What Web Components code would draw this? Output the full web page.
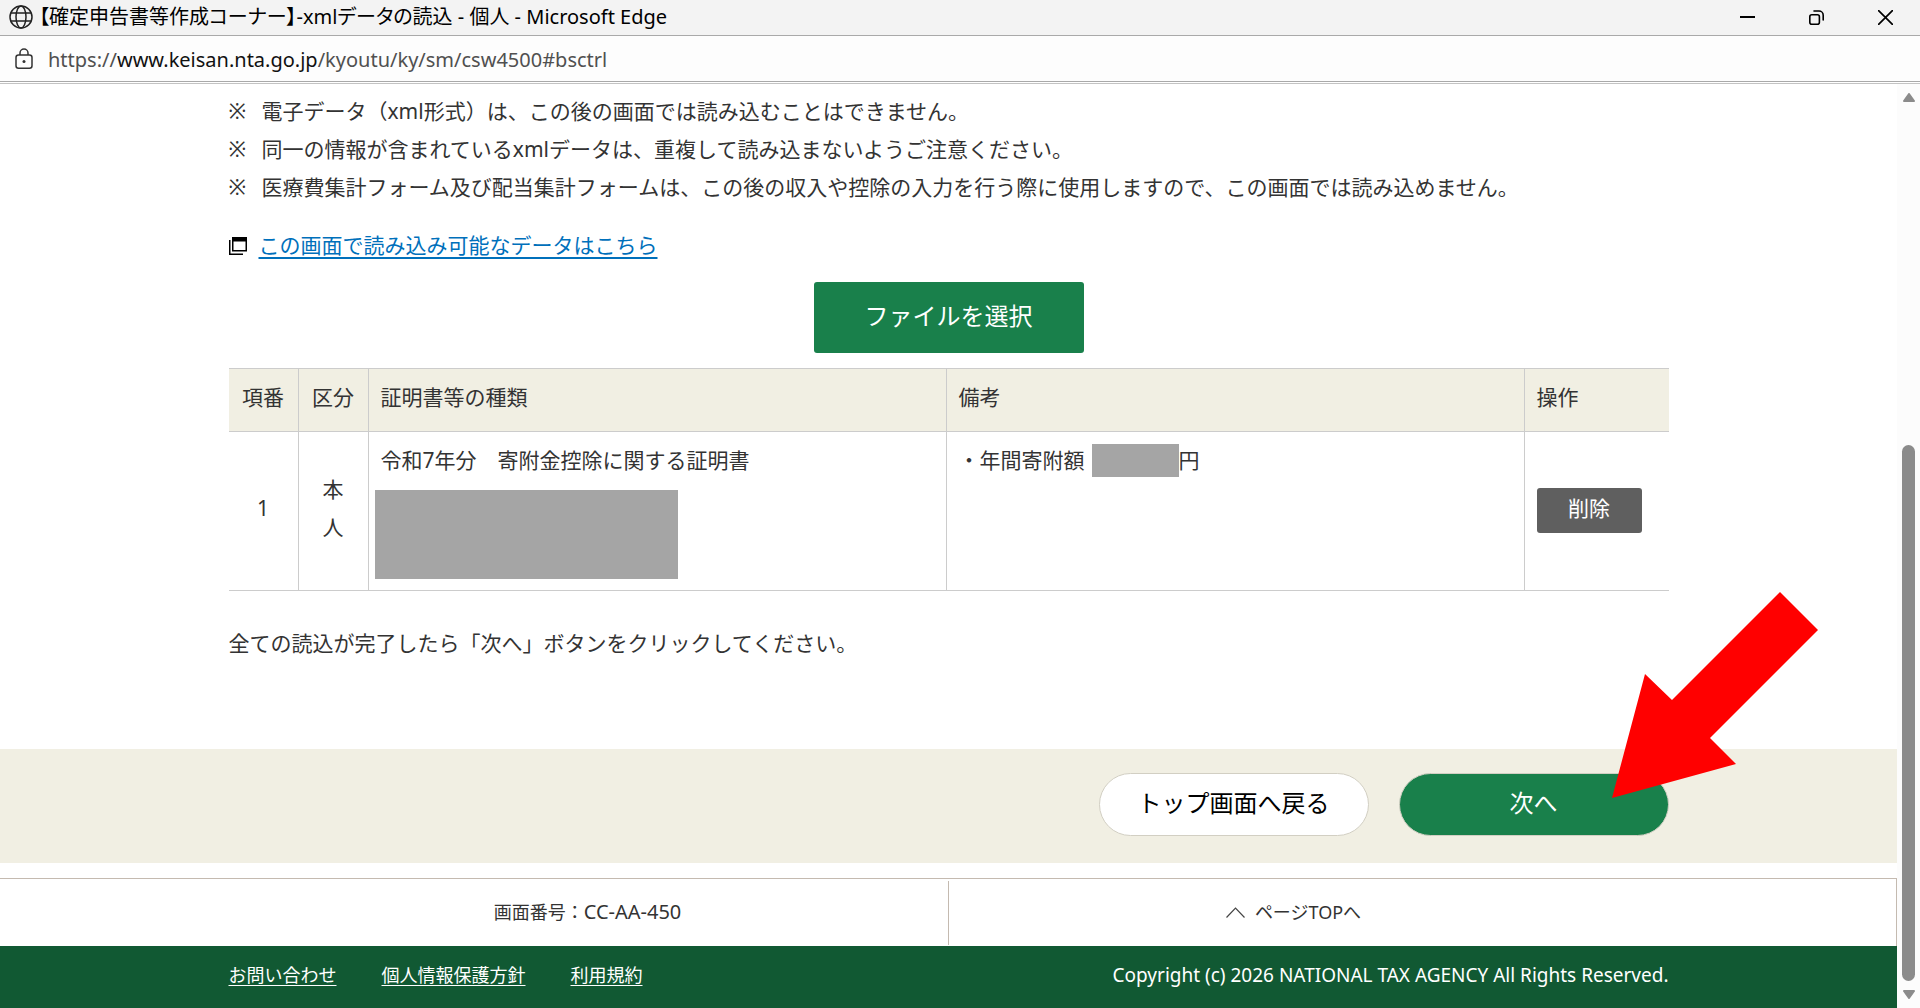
<!DOCTYPE html>
<html lang="ja">
<head>
<meta charset="utf-8">
<meta name="viewport" content="width=device-width, initial-scale=1">
<title>【確定申告書等作成コーナー】-xmlデータの読込 - 個人</title>
<style>
  body {
    margin: 0;
    background: #fff;
    color: #333;
    font-family: "Noto Sans", "Noto Sans CJK JP", sans-serif;
    font-size: 21px;
    line-height: 38px;
  }
</style>
</head>
<body>
<browser-window>
  <title-bar slot="title">【確定申告書等作成コーナー】-xmlデータの読込 - 個人 - Microsoft Edge</title-bar>
  <address-bar slot="address">https://<b>www.keisan.nta.go.jp</b>/kyoutu/ky/sm/csw4500#bsctrl</address-bar>

  <page-section>
    <note-list>
      <note-item>電子データ（xml形式）は、この後の画面では読み込むことはできません。</note-item>
      <note-item>同一の情報が含まれているxmlデータは、重複して読み込まないようご注意ください。</note-item>
      <note-item>医療費集計フォーム及び配当集計フォームは、この後の収入や控除の入力を行う際に使用しますので、この画面では読み込めません。</note-item>
    </note-list>
    <window-link href="#data">この画面で読み込み可能なデータはこちら</window-link>
    <action-button kind="select">ファイルを選択</action-button>
    <certificate-table></certificate-table>
    <guide-text>全ての読込が完了したら「次へ」ボタンをクリックしてください。</guide-text>
  </page-section>

  <button-band>
    <action-button kind="back">トップ画面へ戻る</action-button>
    <pointed-item><action-button kind="next">次へ</action-button></pointed-item>
  </button-band>
  <page-info screen="CC-AA-450"></page-info>
  <site-footer>Copyright (c) 2026 NATIONAL TAX AGENCY All Rights Reserved.</site-footer>
</browser-window>

<script>
  const component = (name, html, setup) => {
    const template = document.createElement('template');
    template.innerHTML = html;
    customElements.define(name, class extends HTMLElement {
      connectedCallback() {
        if (this.shadowRoot) return;
        this.attachShadow({ mode: 'open' }).append(template.content.cloneNode(true));
        if (setup) setup(this, this.shadowRoot);
      }
    });
  };

  component('browser-window', `
    <style>
      :host { display: flex; flex-direction: column; min-height: 100vh; }
      .view { display: flex; flex: 1; border-top: 1px solid #c3c3c3; margin-top: 1px; }
      main { display: flex; flex-direction: column; flex: 1; min-width: 0; }
    </style>
    <slot name="title"></slot>
    <slot name="address"></slot>
    <div class="view"><main><slot></slot></main><scroll-track></scroll-track></div>`);

  component('title-bar', `
    <style>
      :host { display: flex; align-items: center; height: 35px; padding-left: 9px;
              background: #f3f3f3; border-bottom: 1px solid #a9a9a9; color: #000;
              font-size: 20px; line-height: 33px; }
      .globe { flex: none; width: 24px; height: 24px; margin: 0 6px 2px 0; }
      .text { flex: 1; min-width: 0; padding-bottom: 2px; overflow: hidden; white-space: nowrap; font-feature-settings: "palt"; }
      button { flex: none; display: grid; place-items: center; width: 69px; height: 35px; padding: 0;
               border: 0; background: none; color: inherit; }
    </style>
    <svg class="globe" viewBox="0 0 24 24" fill="none" stroke="#222" stroke-width="1.5">
      <circle cx="12" cy="12" r="11"/><ellipse cx="12" cy="12" rx="5" ry="11"/>
      <path d="M2 8h20M2 16h20"/>
    </svg>
    <span class="text"><slot></slot></span>
    <button aria-label="最小化"><svg width="15" height="15" stroke="#000" stroke-width="2"><path d="M0 7h15"/></svg></button>
    <button aria-label="元に戻す"><svg width="15" height="15" fill="none" stroke="#000" stroke-width="1.6"><rect x="0.8" y="4.8" width="9.6" height="9.4" rx="2"/><path d="M5 1h5a4.200 4.200 0 0 1 4.200 4.200v4.800" stroke-linecap="round"/></svg></button>
    <button aria-label="閉じる"><svg width="15" height="15" stroke="#000" stroke-width="1.7"><path d="M0 0l15 15M15 0L0 15"/></svg></button>`);

  component('address-bar', `
    <style>
      :host { display: flex; align-items: center; height: 45px; padding-left: 15px; gap: 15px;
              background: #fdfdfd; border-bottom: 1px solid #a9a9a9; color: #505050;
              font-size: 20px; line-height: 43px; }
      svg { flex: none; width: 18px; height: 22px; }
      span { padding-top: 2px; }
      ::slotted(b) { font-weight: inherit; color: #111; }
    </style>
    <svg viewBox="0 0 18 22" fill="none" stroke="#333" stroke-width="1.5">
      <rect x="1" y="7" width="16" height="13.200" rx="2.500"/><path d="M5 7V5a4 4 0 0 1 8 0v2"/>
      <circle cx="9" cy="13.500" r="1.500" fill="#333" stroke="none"/>
    </svg>
    <span><slot></slot></span>`);

  component('scroll-track', `
    <style>
      :host { display: flex; flex-direction: column; align-items: center; flex: none; width: 23px;
              box-sizing: border-box; padding: 9px 0; background: #fcfcfc; }
      svg { width: 12px; height: 9px; fill: #8b8b8b; stroke: #8b8b8b; stroke-width: 2; stroke-linejoin: round; }
      .before { flex: 343; } .thumb { flex: 536; width: 13px; border-radius: 7px; background: #8b8b8b; }
      .after { height: 9px; }
    </style>
    <svg viewBox="0 0 12 9"><path d="M6 1L11 8H1z"/></svg>
    <div class="before"></div><div class="thumb"></div><div class="after"></div>
    <svg viewBox="0 0 12 9"><path d="M6 8L11 1H1z"/></svg>`);

  component('page-section', `
    <style>
      :host { display: flex; flex-direction: column; flex: 1; width: 100%; max-width: 1440px;
              margin: 0 auto; padding: 8px 0 84px; box-sizing: border-box; }
    </style><slot></slot>`);

  component('note-list', `<style>:host { display: block; }</style><div role="list"><slot></slot></div>`);

  component('note-item', `
    <style>:host { display: flex; } .mark { flex: none; width: 33px; }</style>
    <span class="mark">※</span><span><slot></slot></span>`,
    host => host.setAttribute('role', 'listitem'));

  component('window-link', `
    <style>
      :host { display: flex; align-items: center; gap: 12px; margin-top: 20px; }
      svg { flex: none; width: 18px; height: 18px; margin-top: 2px; }
      a { color: #0070bb; text-decoration-thickness: 2px; text-underline-offset: 4px; }
    </style>
    <svg viewBox="0 0 18 18"><path d="M0 3h1.500v13.500H14V18H0z" fill="#000"/><path d="M3 0h15v14.500H3zM4.500 4.500V13h12V4.500z" fill="#000" fill-rule="evenodd"/></svg>
    <a><slot></slot></a>`,
    (host, root) => root.querySelector('a').href = host.getAttribute('href'));

  component('action-button', `
    <style>
      :host { display: block; }
      :host([kind="select"]) { align-self: center; margin: 18px 0 15px; }
      button { display: block; box-sizing: border-box; width: 270px; height: 63px; padding: 0 0 4px;
               border: 1px solid #d2cfc3; border-radius: 32px; background: #fff; color: #000;
               font: inherit; font-size: 24px; line-height: 36px; }
      :host([kind="next"]) button, :host([kind="select"]) button { background: #19804b; color: #fff; }
      :host([kind="select"]) button { height: 71px; border: 0; border-radius: 3px; }
      :host([kind="delete"]) button { width: 105px; height: 45px; border: 0; border-radius: 3px;
               background: #5f5f5f; color: #fff; font-size: 21px; }
    </style>
    <button type="button"><slot></slot></button>`);

  component('masked-value', `
    <style>
      :host { display: inline-block; width: 87px; height: 33px; margin: 0 0 4px 7px; vertical-align: middle; background: #a5a5a5; }
      :host([block]) { display: block; width: 303px; height: 89px; margin: 11px 0 0 -6px; }
    </style>`);

  component('certificate-table', `
    <style>
      :host { display: block; }
      table { width: 100%; table-layout: fixed; border-collapse: collapse; }
      th, td { padding: 9px 12px 15px; border: 1px solid #ccc; font-weight: normal; text-align: left; vertical-align: top; }
      th:first-child, td:first-child { border-left: 0; }
      th:last-child, td:last-child { border-right: 0; }
      th { background: #f1efe3; white-space: nowrap; }
      .no, .who { width: 45px; text-align: center; }
      .op { width: 120px; }
      td { padding-bottom: 11px; }
      td.no, td.who, td.op { vertical-align: middle; }
      td.no { padding: 0 12px 6px; }
      td.who { padding: 0 24px 6px; }
    </style>
    <table>
      <thead><tr><th class="no">項番</th><th class="who">区分</th><th>証明書等の種類</th><th>備考</th><th class="op">操作</th></tr></thead>
      <tbody><tr>
        <td class="no">1</td><td class="who">本人</td>
        <td>令和7年分　寄附金控除に関する証明書<masked-value block></masked-value></td>
        <td>・年間寄附額<masked-value></masked-value>円</td>
        <td class="op"><action-button kind="delete">削除</action-button></td>
      </tr></tbody>
    </table>`);

  component('guide-text', `<style>:host { display: block; margin-top: 33px; }</style><slot></slot>`);

  component('button-band', `
    <style>
      :host { display: block; padding: 24px 0 27px; background: #f1efe3; }
      .inner { display: flex; justify-content: flex-end; gap: 30px; max-width: 1440px; margin: 0 auto; }
    </style><div class="inner"><slot></slot></div>`);

  component('pointed-item', `
    <style>
      :host { display: block; position: relative; }
      svg { position: absolute; right: -149px; bottom: 38px; width: 207px; height: 206px; pointer-events: none; }
    </style>
    <slot></slot>
    <svg viewBox="0 0 207 206" fill="#f00"><path d="M169 0L207 38L99 146L125 172L1 206L34 82L61 108z"/></svg>`);

  component('page-info', `
    <style>
      :host { display: flex; margin-top: 15px; border: solid #c4bab0; border-width: 1px 1px 0 0;
              font-size: 18px; line-height: 62px; }
      .cell { display: flex; flex: 1; margin: 2px 0 1px; padding-bottom: 2px; }
      .cell:first-of-type { justify-content: flex-end; }
      .cell + .cell { border-left: 1px solid #c4bab0; }
      .half { display: flex; justify-content: center; flex: 0 1 720px; }
      #code { font-size: 20px; }
      a { display: flex; align-items: center; gap: 10px; margin-right: 30px; color: inherit; text-decoration: none; }
      svg { width: 19px; height: 11px; }
    </style>
    <div class="cell"><div class="half"><span>画面番号：</span><span id="code"></span></div></div>
    <div class="cell"><div class="half"><a href="#top"><svg viewBox="0 0 19 11" fill="none" stroke="#444" stroke-width="1.200"><path d="M0.500 10.500L9.500 1L18.500 10.500"/></svg>ページTOPへ</a></div></div>`,
    (host, root) => root.getElementById('code').textContent = host.getAttribute('screen'));

  component('site-footer', `
    <style>
      :host { display: block; padding: 11px 0 15px; background: #115933; color: #fff; font-size: 18px; line-height: 36px; }
      .inner { display: flex; justify-content: space-between; max-width: 1440px; margin: 0 auto; }
      nav { display: flex; gap: 45px; }
      a { color: inherit; text-underline-offset: 3px; }
      small { font-size: 19px; }
    </style>
    <div class="inner">
      <nav><a href="#contact">お問い合わせ</a><a href="#privacy">個人情報保護方針</a><a href="#terms">利用規約</a></nav>
      <small><slot></slot></small>
    </div>`);
</script>
</body>
</html>
